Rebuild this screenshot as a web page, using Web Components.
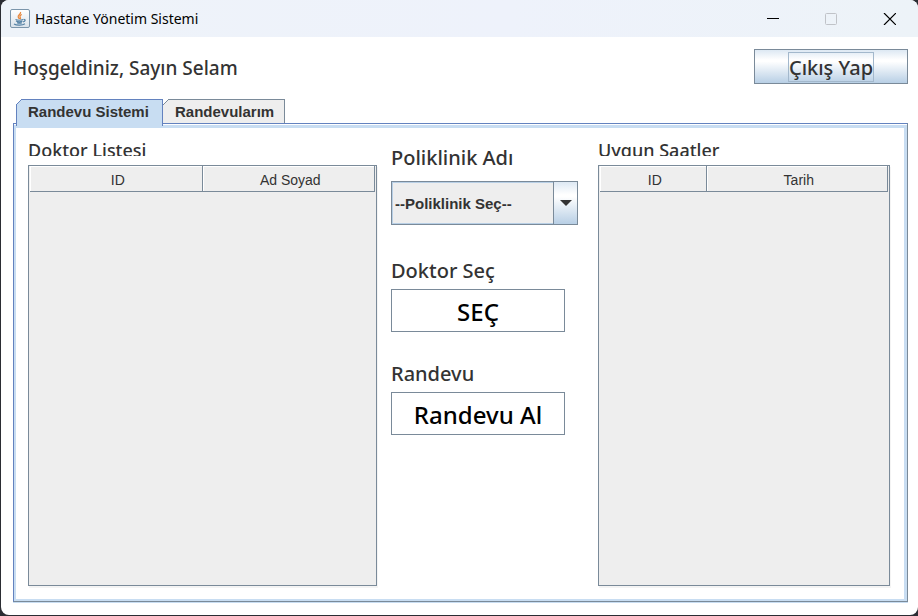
<!DOCTYPE html>
<html lang="tr">
<head>
<meta charset="utf-8">
<title>Hastane Yönetim Sistemi</title>
<style>
  html, body { margin: 0; height: 100%; }
  body { background: #2b2d33; font-family: "Noto Sans", "Open Sans", sans-serif; color: #333; overflow: hidden; }
</style>
</head>
<body>
<app-window caption="Hastane Yönetim Sistemi">
  <welcome-bar name="Selam"></welcome-bar>
  <tab-panel>
    <data-list label="Doktor Listesi" columns="ID:50,Ad Soyad:50"></data-list>
    <booking-form></booking-form>
    <data-list label="Uygun Saatler" columns="ID:37,Tarih:63"></data-list>
  </tab-panel>
</app-window>

<script>
class Base extends HTMLElement {
  constructor() { super(); this.attachShadow({ mode: "open" }); }
  connectedCallback() { this.shadowRoot.innerHTML = this.view(); }
}

customElements.define("app-window", class extends Base {
  view() {
    return `
<style>
  :host { display: flex; flex-direction: column; box-sizing: border-box; height: 100vh; padding: 0 0 1px 1px; }
  .frame { flex: 1; display: flex; flex-direction: column; min-height: 0; background: #fff; border-radius: 8px; overflow: hidden; }
  header { display: flex; align-items: center; height: 37px; background: linear-gradient(90deg, #eef3f9, #eef2fb 55%, #edf3f8); color: #000; }
  .logo { margin: 0 5px 0 9px; display: block; }
  h1 { flex: 1; margin: 0; font-size: 14px; line-height: 20px; font-weight: 400; }
  button { width: 58px; height: 37px; padding: 0; border: 0; background: none; display: grid; place-items: center; color: #000; }
  main { flex: 1; display: flex; flex-direction: column; min-height: 0; padding: 12px 10px 13px 12px; }
</style>
<div class="frame">
  <header>
    <svg class="logo" width="20" height="20" viewBox="0 0 20 20" aria-hidden="true">
      <defs><linearGradient id="g" x2="0" y2="1"><stop stop-color="#fff"/><stop offset="1" stop-color="#d9e2ea"/></linearGradient></defs>
      <rect x=".5" y=".5" width="19" height="18" rx="1.5" fill="url(#g)" stroke="#7b95ab"/>
      <path d="M10.500 3c1 2-3 3-2.300 5 .3.900 1 1.200 1.200 2M11.800 5.500c-2 1-2.200 2-1.500 3 .5.700.2 1.200-.5 1.700" fill="none" stroke="#e8873c" stroke-width="1.300"/>
      <path d="M5.500 10.500c2 .8 5.500.8 7.500 0M6 12c2 .9 4.800.9 6.500 0M7 13.700c1.500.6 3.500.6 5 0M13.500 10.500c2.500-.3 2 2-.4 2.400M4 15c2.500 1.600 8.500 1.500 11-.2" fill="none" stroke="#5683a6" stroke-width="1.200"/>
    </svg>
    <h1>${this.getAttribute("caption")}</h1>
    <button type="button" aria-label="Simge durumuna küçült"><svg width="12" height="12"><path d="M0 5.500h12" stroke="#000"/></svg></button>
    <button type="button" aria-label="Ekranı kapla" disabled><svg width="12" height="12"><rect x=".5" y=".5" width="11" height="11" rx="1" fill="none" stroke="#c0c3c8"/></svg></button>
    <button type="button" aria-label="Kapat"><svg width="14" height="12"><path d="M2 0l12 12M14 0L2 12" stroke="#000" stroke-width="1.200"/></svg></button>
  </header>
  <main><slot></slot></main>
</div>`;
  }
});

customElements.define("welcome-bar", class extends Base {
  view() {
    return `
<style>
  :host { display: flex; justify-content: space-between; align-items: center; height: 35px; }
  p { margin: 0; font-size: 19px; line-height: 28px; font-weight: 550; padding-top: 2px; }
  button { box-sizing: border-box; width: 154px; height: 35px; padding: 0; border: 1px solid #7a8a99; font: 550 20px/30px "Noto Sans", "Open Sans", sans-serif; color: #333;
    background: linear-gradient(#dde8f3, #fff 30%, #fff 35%, #b8cfe5); }
  span { display: inline-block; box-sizing: border-box; height: 30px; border: 1px solid #a3b8cc; vertical-align: top; }
</style>
<p>Hoşgeldiniz, Sayın ${this.getAttribute("name")}</p>
<button type="button"><span>Çıkış Yap</span></button>`;
  }
});

customElements.define("tab-panel", class extends Base {
  view() {
    const corner = c => `<svg class="corner" width="6" height="6" aria-hidden="true"><path d="M0 0h6L0 6z" fill="#fff"/><path d="M0 6L6 0" stroke="${c}"/></svg>`;
    return `
<style>
  :host { flex: 1; display: flex; flex-direction: column; min-height: 0; padding-top: 15px; }
  nav { display: flex; padding-left: 3px; height: 24px; }
  button { position: relative; box-sizing: border-box; height: 24px; padding: 0 0 0 11px; text-align: left; border: 1px solid #7a8a99; border-bottom: 0; background: #eee; color: #333;
    font: bold 15px/24px "Liberation Sans", Arial, sans-serif; }
  button[aria-selected="true"] { height: 27px; padding-bottom: 3px; width: 147px; z-index: 1; background: #c8ddf2; border-color: #6382bf; }
  button[aria-selected="false"] { width: 122px; padding-left: 12px; border-left: 0; }
  .corner { position: absolute; left: -1px; top: -1px; }
  button[aria-selected="false"] .corner { left: 0; }
  .outer { flex: 1; display: flex; min-height: 0; border: 1px solid #6382bf; border-right-color: #7a8a99; border-bottom-color: #7a8a99; box-shadow: 0 1px #c8ddf2; padding-top: 1px; }
  .inner { flex: 1; display: grid; grid-template-columns: minmax(0, 349fr) 187px minmax(0, 298fr); column-gap: 14px; box-sizing: border-box;
    border: 2px solid #c8ddf2; border-top-width: 3px; border-right-width: 3px; padding: 12px 14px 13px 12px; }
  ::slotted(:last-child) { margin-left: 6px; }
</style>
<nav role="tablist">
  <button type="button" role="tab" aria-selected="true">${corner("#6382bf")}Randevu Sistemi</button>
  <button type="button" role="tab" aria-selected="false">${corner("#7a8a99")}Randevularım</button>
</nav>
<div class="outer"><div class="inner" role="tabpanel"><slot></slot></div></div>`;
  }
});

customElements.define("data-list", class extends Base {
  view() {
    const cols = this.getAttribute("columns").split(",").map(c => c.split(":"));
    return `
<style>
  :host { display: flex; flex-direction: column; min-height: 0; }
  h2 { margin: 0 0 9px; height: 16px; overflow: hidden; font-size: 18px; line-height: 20px; font-weight: 500; }
  .pane { flex: 1; background: #eee; border: 1px solid #7a8a99; box-shadow: 1px 2px #f4f4f4; }
  table { width: 100%; box-sizing: border-box; border-collapse: separate; border-spacing: 0; table-layout: fixed; padding: 0 1px; }
  th { box-sizing: border-box; height: 26px; padding: 3px 0 0 4px; border: solid #7a8a99; border-width: 0 1px 1px 0; box-shadow: inset 1px 1px #fff;
    font: 14px/20px "Liberation Sans", Arial, sans-serif; text-align: center; }
</style>
<h2 id="t">${this.getAttribute("label")}</h2>
<div class="pane">
  <table aria-labelledby="t"><thead><tr>${cols.map(([n, w]) => `<th scope="col" style="width:${w}%">${n}</th>`).join("")}</tr></thead></table>
</div>`;
  }
});

customElements.define("booking-form", class extends Base {
  view() {
    return `
<style>
  :host { display: flex; flex-direction: column; align-items: flex-start; padding-top: 4px; }
  label { font-size: 20px; line-height: 28px; font-weight: 500; }
  .combo { box-sizing: border-box; display: grid; grid-template-columns: 1fr 24px; width: 100%; height: 44px; margin: 9px 0 32px; border: 1px solid #7a8a99; }
  select { grid-area: 1 / 1 / 2 / 3; appearance: none; min-width: 0; margin: 0; padding: 2px 0 0 2px; border: 1px solid #b8cfe5; border-right: 0; border-radius: 0; background: #eee; color: #333;
    font: bold 15px/20px "Liberation Sans", Arial, sans-serif; }
  .arrow { grid-area: 1 / 2; z-index: 1; pointer-events: none; display: grid; place-items: center; border-left: 1px solid #7a8a99; background: linear-gradient(#dde8f3, #fff 30%, #fff 35%, #b8cfe5); }
  button { box-sizing: border-box; width: 174px; height: 43px; margin: 4px 0 28px; padding: 2px 0 0; border: 1px solid #7a8a99; background: #fff; color: #000;
    font: 550 24px/32px "Noto Sans", "Open Sans", sans-serif; }
</style>
<label for="clinic">Poliklinik Adı</label>
<div class="combo">
  <select id="clinic"><option>--Poliklinik Seç--</option></select>
  <span class="arrow"><svg width="12" height="6" aria-hidden="true"><path d="M0 0h12L6 6z" fill="#333"/></svg></span>
</div>
<label for="pick">Doktor Seç</label>
<button id="pick" type="button">SEÇ</button>
<label for="book">Randevu</label>
<button id="book" type="button">Randevu Al</button>`;
  }
});
</script>
</body>
</html>
